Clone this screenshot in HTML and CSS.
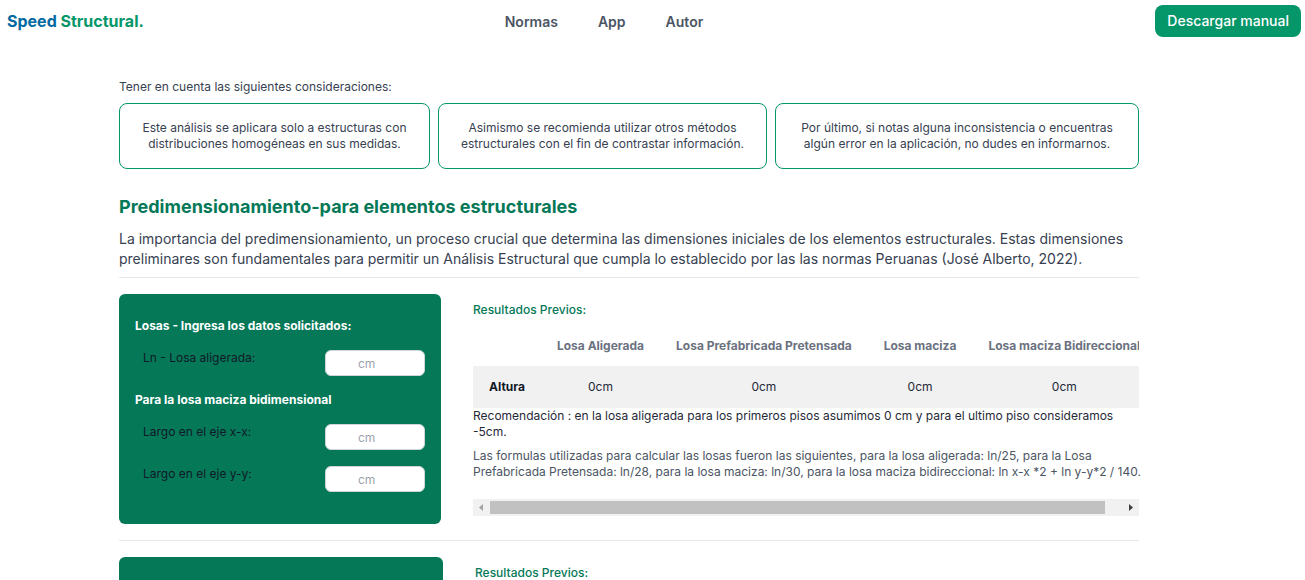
FILE: index.html
```html
<!DOCTYPE html>
<html lang="es">
<head>
<meta charset="utf-8">
<meta name="viewport" content="width=device-width, initial-scale=1">
<title>Speed Structural</title>
<link rel="stylesheet" href="styles.css">
</head>
<body>
<header class="header">
  <a class="brand" href="#"><span class="brand-blue">Speed</span> Structural.</a>
  <nav class="nav">
    <a href="#normas">Normas</a>
    <a href="#app">App</a>
    <a href="#autor">Autor</a>
  </nav>
  <button class="download" type="button">Descargar manual</button>
</header>
<main class="main">
  <p class="intro">Tener en cuenta las siguientes consideraciones:</p>
  <div class="notes">
    <p class="note">Este análisis se aplicara solo a estructuras con distribuciones homogéneas en sus medidas.</p>
    <p class="note">Asimismo se recomienda utilizar otros métodos estructurales con el fin de contrastar información.</p>
    <p class="note">Por último, si notas alguna inconsistencia o encuentras algún error en la aplicación, no dudes en informarnos.</p>
  </div>
  <h1 class="title">Predimensionamiento-para elementos estructurales</h1>
  <p class="lead">La importancia del predimensionamiento, un proceso crucial que determina las dimensiones iniciales de los elementos estructurales. Estas dimensiones preliminares son fundamentales para permitir un Análisis Estructural que cumpla lo establecido por las las normas Peruanas (José Alberto, 2022).</p>

  <section class="block">
    <form class="panel">
      <h2 class="panel-title">Losas - Ingresa los datos solicitados:</h2>
      <div class="field"><label for="ln">Ln - Losa aligerada:</label><input id="ln" type="text" placeholder="cm"></div>
      <h2 class="panel-title">Para la losa maciza bidimensional</h2>
      <div class="field"><label for="xx">Largo en el eje x-x:</label><input id="xx" type="text" placeholder="cm"></div>
      <div class="field"><label for="yy">Largo en el eje y-y:</label><input id="yy" type="text" placeholder="cm"></div>
    </form>
    <div class="results">
      <h3 class="results-title">Resultados Previos:</h3>
      <div class="table-view">
        <table class="table">
          <thead>
            <tr><td></td><th scope="col">Losa Aligerada</th><th scope="col">Losa Prefabricada Pretensada</th><th scope="col">Losa maciza</th><th scope="col">Losa maciza Bidireccional</th></tr>
          </thead>
          <tbody>
            <tr><th scope="row">Altura</th><td>0cm</td><td>0cm</td><td>0cm</td><td>0cm</td></tr>
          </tbody>
        </table>
      </div>
      <p class="advice">Recomendación : en la losa aligerada para los primeros pisos asumimos 0 cm y para el ultimo piso consideramos -5cm.</p>
      <p class="formulas">Las formulas utilizadas para calcular las losas fueron las siguientes, para la losa aligerada: ln/25, para la Losa Prefabricada Pretensada: ln/28, para la losa maciza: ln/30, para la losa maciza bidireccional: ln x-x *2 + ln y-y*2 / 140.</p>
      <div class="scrollbar">
        <button class="scroll-button" type="button" aria-label="Desplazar a la izquierda" disabled><svg width="17" height="17" viewBox="0 0 17 17"><path d="M10 5v7L6 8.500z" fill="#a3a3a3"/></svg></button>
        <div class="scroll-track"><div class="scroll-thumb"></div></div>
        <button class="scroll-button" type="button" aria-label="Desplazar a la derecha"><svg width="17" height="17" viewBox="0 0 17 17"><path d="M7 5v7l4-3.500z" fill="#404040"/></svg></button>
      </div>
    </div>
  </section>

  <section class="block block-next">
    <form class="panel"></form>
    <div class="results">
      <h3 class="results-title">Resultados Previos:</h3>
    </div>
  </section>
</main>
</body>
</html>
```
FILE: styles.css
```css
* { box-sizing: border-box; }
body, h1, h2, h3, p { margin: 0; }
html, body { height: 100%; }
body {
  overflow: hidden;
  background: #fff;
  color: #374151;
  font-family: Inter, "Liberation Sans", sans-serif;
  font-size: 12px;
  line-height: 16px;
}
button, input { font: inherit; }
a { color: inherit; text-decoration: none; }

.header {
  display: grid;
  grid-template-columns: 1fr auto 1fr;
  align-items: center;
  padding: 5px 4px 5px 7px;
}
.brand { color: #059669; font-size: 16px; font-weight: 700; line-height: 24px; }
.brand-blue { color: #0369a1; }
.nav {
  display: flex;
  gap: 40px;
  margin-right: 100px;
  padding-top: 2px;
  color: #4b5563;
  font-size: 14px;
  font-weight: 600;
  line-height: 20px;
}
.download {
  justify-self: end;
  padding: 6px 12px;
  border: 0;
  border-radius: 8px;
  background: #059669;
  color: #fff;
  font-size: 14px;
  font-weight: 500;
  line-height: 20px;
}

.main { padding: 37px 166px 0 119px; }
.notes { display: grid; grid-template-columns: 311fr 329fr 364fr; gap: 8px; margin-top: 8px; }
.note { padding: 16px 20px; border: 1px solid #059669; border-radius: 8px; text-align: center; }
.title { margin-top: 24px; color: #047857; font-size: 18px; font-weight: 700; line-height: 28px; }
.lead { margin-top: 8px; font-size: 14px; line-height: 20px; }

.block {
  display: grid;
  grid-template-columns: 322fr 666fr;
  gap: 32px;
  margin-top: 8px;
  padding-top: 16px;
  border-top: 1px solid #e5e7eb;
}
.block-next { grid-template-columns: 324fr 664fr; margin-top: 16px; }
.panel {
  display: flex;
  flex-direction: column;
  gap: 16px;
  padding: 24px 16px 32px;
  border-radius: 6px;
  background: #047857;
}
.panel-title { color: #fff; font-size: 12px; font-weight: 700; line-height: 16px; }
.field { display: flex; justify-content: space-between; padding-left: 8px; color: #111827; }
.field input {
  width: 100px;
  height: 26px;
  padding: 4px 32px;
  border: 1px solid #d1d5db;
  border-radius: 6px;
  background: #fff;
}
.field input::placeholder { color: #9ca3af; opacity: 1; }

.results { min-width: 0; padding-top: 8px; }
.results-title { color: #047857; font-size: 12px; font-weight: 500; line-height: 16px; }
.table-view { margin-top: 8px; overflow: hidden; }
.table { min-width: 100%; border-collapse: collapse; text-align: center; white-space: nowrap; color: #1f2937; }
.table th, .table td { padding: 12px 16px; }
.table thead th { color: #6b7280; font-weight: 700; }
.table tbody tr { background: #f1f1f1; }
.table tbody th, .table tbody td { padding: 13px 16px; }
.table tbody th { color: #111827; font-weight: 700; }
.advice { color: #1f2937; }
.formulas { margin-top: 8px; margin-right: -16px; color: #4b5563; }
.scrollbar { display: flex; height: 17px; margin-top: 19px; background: #f1f1f1; }
.scroll-button { display: flex; width: 17px; padding: 0; border: 0; background: none; }
.scroll-track { flex: 1; padding: 2px 0; }
.scroll-thumb { width: 97.3%; height: 100%; background: #c1c1c1; }
```
